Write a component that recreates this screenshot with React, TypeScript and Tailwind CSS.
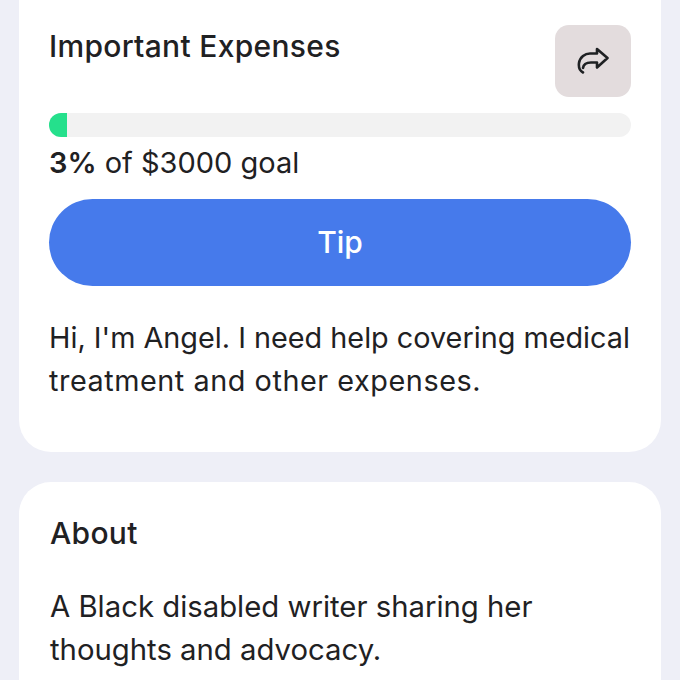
import React from 'react';

export default function App() {
  return (
    <div className="h-[680px] w-[680px] overflow-hidden bg-[#eeeff7] px-[19px] font-['Inter',sans-serif] text-[#1f2123]">
      <section className="h-[452px] rounded-b-[32px] bg-white px-[30px] pt-[25px]">
        <div className="flex items-start justify-between">
          <h1 className="mt-[3px] text-[30px] leading-[36px] font-[550] tracking-[0.3px]">Important Expenses</h1>
          <button className="flex h-[72px] w-[76px] items-center justify-center rounded-[14px] bg-[#e3dcdd]">
            <svg width="32" height="28" viewBox="0 0 32 28" fill="none" stroke="#1f2123" strokeWidth="2.6" strokeLinecap="round" strokeLinejoin="round">
              <path d="M6 25.500C3 24 1.500 20 2 16C3 10 8 6.500 13 6.500H20V2L30.500 11L20 20.500V15.500H14C10 15.500 6.500 17 6 21" />
            </svg>
          </button>
        </div>
        <div className="mt-4 h-6 w-full rounded-full bg-[#f2f2f2]">
          <div className="h-6 w-[18px] rounded-l-full bg-[#25e08c]" />
        </div>
        <p className="mt-[8px] text-[29px] leading-[36px]"><b className="font-semibold">3%</b> of $3000 goal</p>
        <button className="mt-[18px] h-[87px] w-full rounded-full bg-[#467aeb] text-[30px] font-medium text-white">Tip</button>
        <p className="mt-[30px] text-[28.8px] leading-[43px]">
          Hi, I'm Angel. I need help covering medical<br />
          <span className="tracking-[0.55px]">treatment and other expenses.</span>
        </p>
      </section>
      <section className="mt-[30px] h-[300px] rounded-[32px] bg-white px-[31px] pt-[33px]">
        <h2 className="text-[30px] leading-[36px] font-[550] tracking-[0.3px]">About</h2>
        <p className="mt-[34px] w-[560px] text-[29.3px] leading-[43px]">
          A Black disabled writer sharing her<br />thoughts and advocacy.
        </p>
      </section>
    </div>
  );
}
